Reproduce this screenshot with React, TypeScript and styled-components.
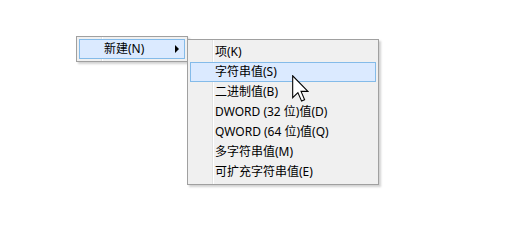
import styled, { createGlobalStyle } from 'styled-components';

const GlobalStyle = createGlobalStyle`
  html, body {
    margin: 0;
    background: #ffffff;
  }
  body {
    font-family: "Noto Sans", "Noto Sans CJK SC", sans-serif;
    font-size: 12px;
    color: #000000;
  }
`;

const Stage = styled.div`
  position: relative;
  box-sizing: border-box;
  height: 245px;
  padding: 36px 0 0 76px;
  display: flex;
  align-items: flex-start;
`;

const Menu = styled.ul<{ $width: number; $offsetTop?: number; $overlap?: boolean }>`
  list-style: none;
  margin: ${({ $offsetTop }) => $offsetTop ?? 0}px 0 0 ${({ $overlap }) => ($overlap ? -1 : 0)}px;
  padding: 2px;
  width: ${({ $width }) => $width}px;
  box-sizing: border-box;
  border: 1px solid #a0a0a0;
  background:
    linear-gradient(
      to right,
      transparent 24px,
      #e2e3e3 24px,
      #e2e3e3 25px,
      #ffffff 25px,
      #ffffff 26px,
      transparent 26px
    ),
    #f0f0f0;
  box-shadow: 2px 2px 2px rgba(0, 0, 0, 0.18);
  position: relative;
  z-index: ${({ $overlap }) => ($overlap ? 2 : 1)};
`;

const Item = styled.li<{ $active?: boolean }>`
  display: flex;
  align-items: center;
  height: 20px;
  box-sizing: border-box;
  padding: 0 5px 0 24px;
  border: 1px solid ${({ $active }) => ($active ? '#84bbe9' : 'transparent')};
  background: ${({ $active }) => ($active ? '#dbeaff' : 'transparent')};
  line-height: 18px;
  white-space: nowrap;
`;

const Arrow = styled.span`
  margin-left: auto;
  width: 0;
  height: 0;
  border-top: 4px solid transparent;
  border-bottom: 4px solid transparent;
  border-left: 4px solid #000000;
`;

const Pointer = styled.svg`
  position: absolute;
  left: 292px;
  top: 75px;
  z-index: 5;
`;

const subItems = [
  '项(K)',
  '字符串值(S)',
  '二进制值(B)',
  'DWORD (32 位)值(D)',
  'QWORD (64 位)值(Q)',
  '多字符串值(M)',
  '可扩充字符串值(E)',
];

export default function App() {
  return (
    <>
      <GlobalStyle />
      <Stage>
        <Menu $width={112}>
          <Item $active>
            新建(N)
            <Arrow />
          </Item>
        </Menu>
        <Menu $width={192} $offsetTop={3} $overlap>
          {subItems.map((label, i) => (
            <Item key={label} $active={i === 1}>
              {label}
            </Item>
          ))}
        </Menu>
        <Pointer width="17" height="27" viewBox="0 0 12.4 19.6">
          <path
            d="M0.5 0.5 L0.5 16.5 L4.3 12.8 L7 19 L9.2 18 L6.6 11.9 L11.6 11.9 Z"
            fill="#ffffff"
            stroke="#000000"
            strokeWidth="0.8"
            strokeLinejoin="miter"
          />
        </Pointer>
      </Stage>
    </>
  );
}
